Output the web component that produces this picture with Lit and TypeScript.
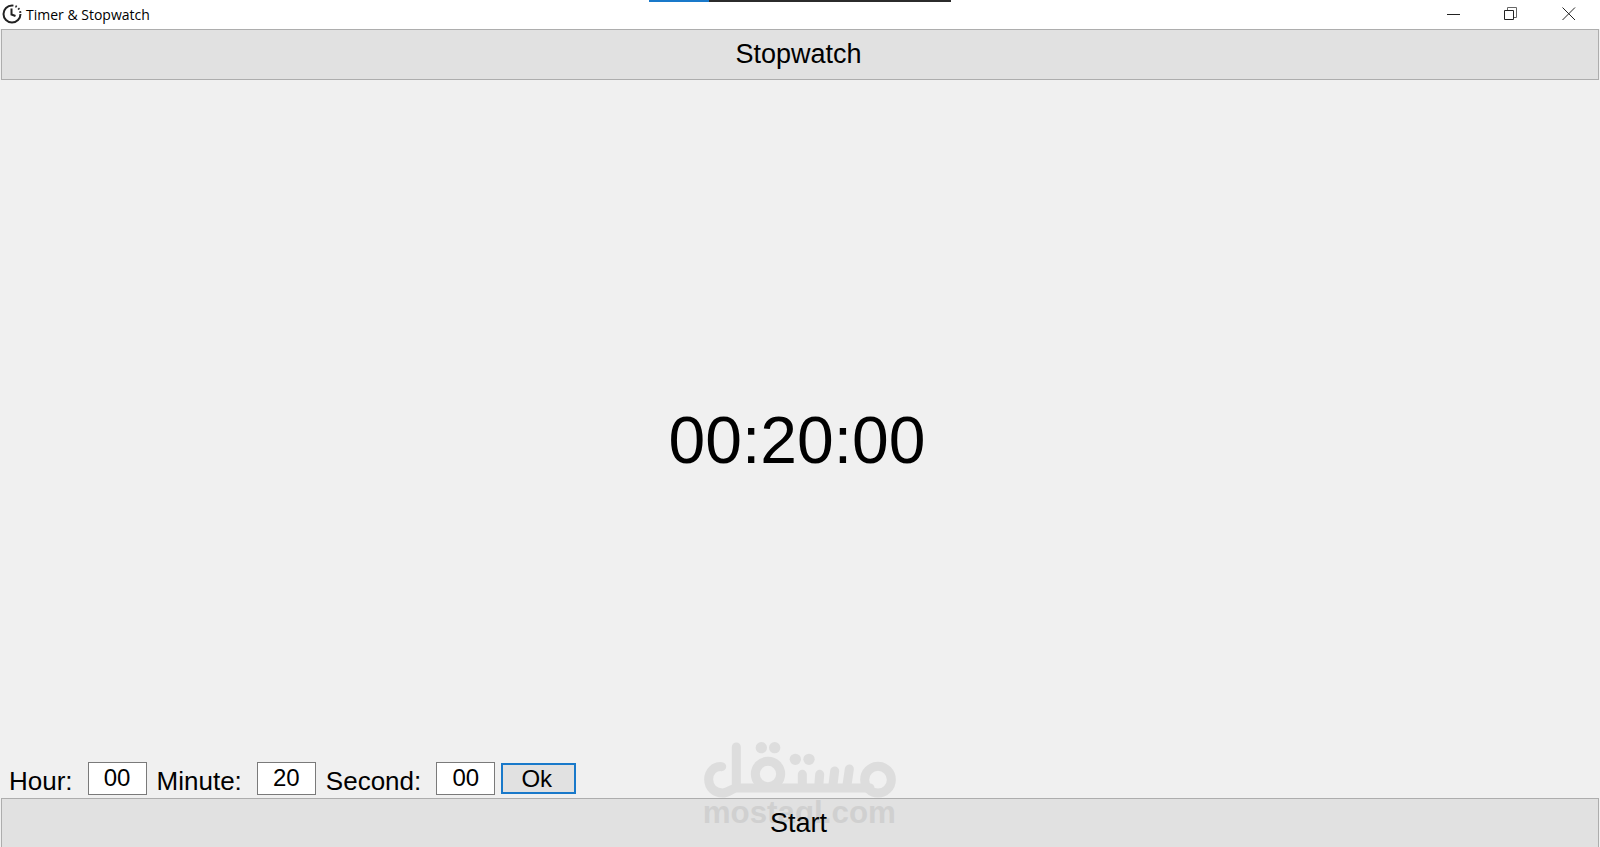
import { LitElement, html, css } from "lit";
import { customElement, state } from "lit/decorators.js";

@customElement("app-watermark")
class AppWatermark extends LitElement {
  static styles = css`
    :host { display: block; }
    svg { display: block; width: 220px; height: 117px; opacity: 0.1; }
    .word { font: bold 94px "Liberation Sans", Arial, sans-serif; }
  `;
  render() {
    return html`<svg viewBox="0 0 660 351" aria-hidden="true">
      <g fill="none" stroke="#404040" stroke-width="27" stroke-linecap="round">
        <path d="M95 110C73 108 56 125 56 148C56 174 75 189 98 189C116 189 126 174 140 174H540" />
        <path d="M139 51V172" />
        <circle cx="234" cy="132" r="38" />
        <path d="M337 133V172M389 133L386 172M434 123L428 172M478 117L470 172" />
        <circle cx="564" cy="149" r="40" />
      </g>
      <g fill="#404040">
        <circle cx="214" cy="53" r="17" /><circle cx="254" cy="53" r="17" />
        <circle cx="316" cy="88" r="17" /><circle cx="357" cy="88" r="17" />
        <text class="word" x="38" y="278">mostaql.com</text>
      </g>
    </svg>`;
  }
}

@customElement("app-root")
class AppRoot extends LitElement {
  @state() private fields = [
    { id: "hour", label: "Hour:", value: "00" },
    { id: "minute", label: "Minute:", value: "20" },
    { id: "second", label: "Second:", value: "00" },
  ];

  static styles = css`
    :host {
      display: flex; flex-direction: column; position: relative;
      height: 100vh; overflow: hidden; box-sizing: border-box;
      background: #f0f0f0; color: #000;
      font-family: "Liberation Sans", Arial, sans-serif;
    }
    button, input { font-family: inherit; color: inherit; margin: 0; padding: 0; box-sizing: border-box; border-radius: 0; }
    .titlebar { display: flex; align-items: flex-start; flex: none; height: 29px; background: #fff; padding: 0 2px; gap: 4px; box-sizing: border-box; }
    .logo { margin-top: 4px; }
    .title { flex: 1; margin: 0; font: 400 14px/29px "Open Sans", "Noto Sans", sans-serif; }
    .controls { display: flex; }
    .win { width: 58px; height: 28px; border: 0; background: none; display: grid; place-items: center; }
    .tab { position: absolute; top: 0; left: 50%; transform: translateX(-50%); display: flex; width: 302px; height: 2px; background: #2b2b2b; }
    .progress { width: 60px; background: #1979ca; }
    .wide { flex: none; height: 51px; margin: 0 1px; padding: 0 3px 2px 0; border: 1px solid #adadad; background: #e1e1e1; font-size: 27px; line-height: 30px; }
    .clock { flex: 1; display: grid; place-items: center; font-size: 66px; line-height: 76px; padding: 39px 6px 0 0; }
    .entry { flex: none; display: flex; align-items: center; box-sizing: border-box; height: 38px; padding: 0 0 2px 9px; }
    .field { display: flex; align-items: center; gap: 15px; margin-right: 10px; font-size: 26px; }
    .field:last-of-type { margin-right: 6px; }
    label { padding-top: 5px; line-height: 28px; }
    input { width: 59px; height: 33px; border: 1px solid #7a7a7a; background: #fff; font-size: 24px; text-align: center; }
    .ok { width: 75px; height: 31px; border: 2px solid #1979ca; background: #e1e1e1; font-size: 24px; line-height: 27px; padding-right: 4px; }
    .bottom { margin-bottom: -2px; }
    .mark { position: absolute; left: 50%; bottom: 0; transform: translateX(-50%); pointer-events: none; }
  `;

  private get time() {
    return this.fields.map((f) => f.value).join(":");
  }

  render() {
    return html`
      <header class="titlebar">
        <svg class="logo" width="20" height="20" viewBox="0 0 20 20" fill="none" stroke="#222" stroke-width="2" aria-hidden="true">
          <path d="M10 1.5A8.5 8.5 0 1 0 18.5 10" />
          <path d="M10 1.5A8.5 8.5 0 0 1 18.5 10" stroke-dasharray="1.5 2" />
          <path d="M9.500 4.500V10.500L13.500 12" />
        </svg>
        <h1 class="title">Timer &amp; Stopwatch</h1>
        <div class="controls">
          <button class="win" aria-label="Minimize"><svg width="13" height="13" fill="none" stroke="#222"><path d="M0 6.5H13" /></svg></button>
          <button class="win" aria-label="Restore"><svg width="14" height="14" fill="none" stroke="#222"><path d="M.5 3.5h9v9h-9z" /><path d="M3.500 3V.5H12.500V10.500H10" stroke="#666" /></svg></button>
          <button class="win" aria-label="Close"><svg width="14" height="14" fill="none" stroke="#222"><path d="M.5 .5L13 13M13 .5L.5 13" /></svg></button>
        </div>
      </header>
      <div class="tab"><div class="progress"></div></div>
      <button class="wide">Stopwatch</button>
      <main class="clock"><time>${this.time}</time></main>
      <form class="entry" @submit=${(e: Event) => e.preventDefault()}>
        ${this.fields.map((f) => html`<div class="field"><label for=${f.id}>${f.label}</label><input id=${f.id} .value=${f.value} /></div>`)}
        <button class="ok">Ok</button>
      </form>
      <button class="wide bottom">Start</button>
      <app-watermark class="mark"></app-watermark>
    `;
  }
}
